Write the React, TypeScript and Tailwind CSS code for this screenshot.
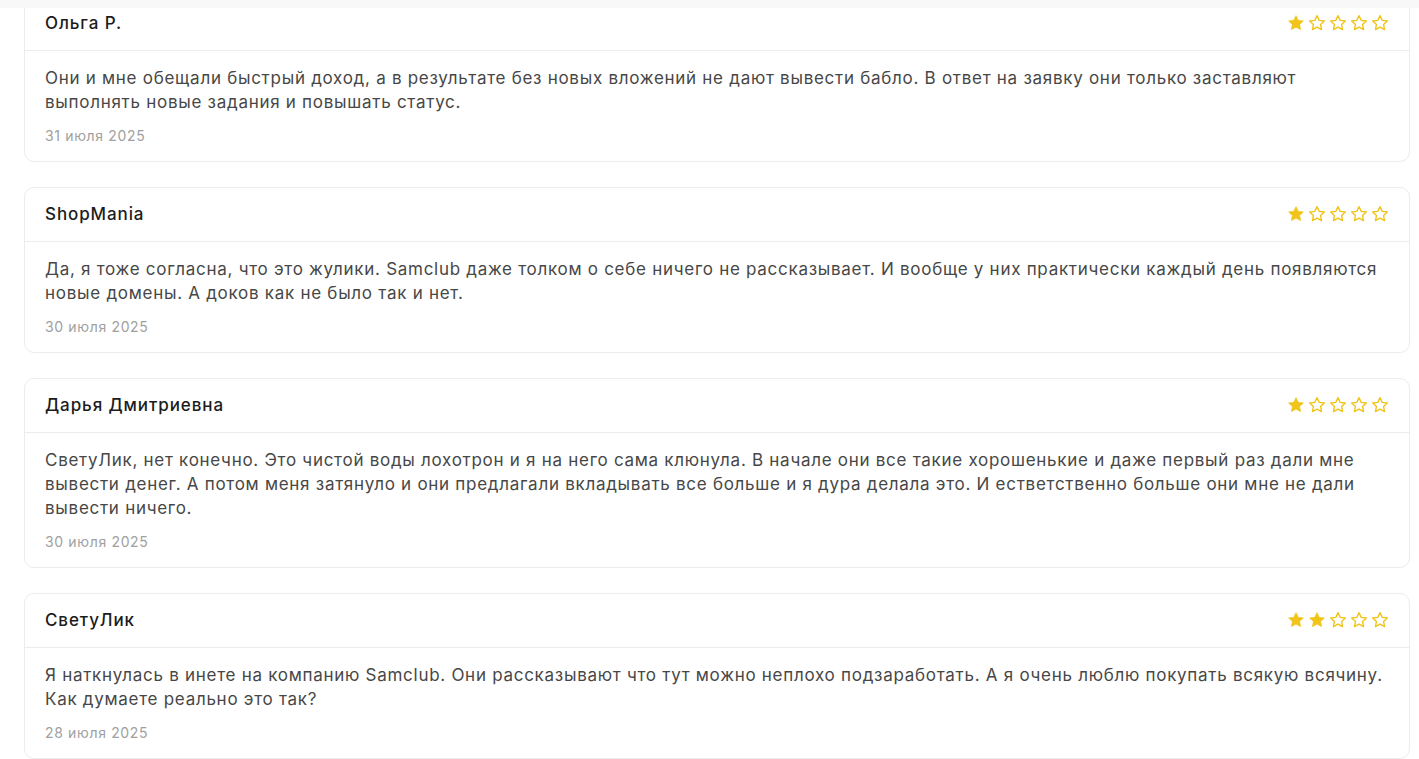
import React from "react";

type Review = { name: string; rating: number; text: string; date: string };

const reviews: Review[] = [
  {
    name: "Ольга Р.",
    rating: 1,
    text: "Они и мне обещали быстрый доход, а в результате без новых вложений не дают вывести бабло. В ответ на заявку они только заставляют выполнять новые задания и повышать статус.",
    date: "31 июля 2025",
  },
  {
    name: "ShopMania",
    rating: 1,
    text: "Да, я тоже согласна, что это жулики. Samclub даже толком о себе ничего не рассказывает. И вообще у них практически каждый день появляются новые домены. А доков как не было так и нет.",
    date: "30 июля 2025",
  },
  {
    name: "Дарья Дмитриевна",
    rating: 1,
    text: "СветуЛик, нет конечно. Это чистой воды лохотрон и я на него сама клюнула. В начале они все такие хорошенькие и даже первый раз дали мне вывести денег. А потом меня затянуло и они предлагали вкладывать все больше и я дура делала это. И естветственно больше они мне не дали вывести ничего.",
    date: "30 июля 2025",
  },
  {
    name: "СветуЛик",
    rating: 2,
    text: "Я наткнулась в инете на компанию Samclub. Они рассказывают что тут можно неплохо подзаработать. А я очень люблю покупать всякую всячину. Как думаете реально это так?",
    date: "28 июля 2025",
  },
];

function Star({ filled }: { filled: boolean }) {
  return (
    <svg width="18" height="18" viewBox="0 0 24 24" className="block">
      <path
        d="M12 2.2l2.95 6.3 6.85.8-5.05 4.7 1.35 6.8L12 17.4l-6.1 3.4 1.35-6.8L2.2 9.3l6.85-.8z"
        fill={filled ? "#f0c419" : "none"}
        stroke="#f0c419"
        strokeWidth={filled ? 1 : 1.8}
        strokeLinejoin="round"
      />
    </svg>
  );
}

function Card({ r }: { r: Review }) {
  return (
    <div className="rounded-[10px] border border-[#ececec] bg-white">
      <div className="flex h-[54px] items-center justify-between border-b border-[#ececec] pl-[20px] pr-[20px]">
        <div className="text-[17px] font-medium tracking-[0.9px] text-[#1c1c1c]">{r.name}</div>
        <div className="-mt-[2px] flex gap-[3px]">
          {[0, 1, 2, 3, 4].map((i) => (
            <Star key={i} filled={i < r.rating} />
          ))}
        </div>
      </div>
      <div className="px-[20px] pt-[15px] pb-[15px]">
        <p className="text-[17px] leading-[24px] tracking-[0.72px] text-[#474747]">{r.text}</p>
        <div className="mt-[12px] text-[14px] leading-[20px] tracking-[0.65px] text-[#a0a0a0]">{r.date}</div>
      </div>
    </div>
  );
}

export default function App() {
  return (
    <div
      className="relative min-h-[759px] overflow-hidden bg-white"
      style={{ fontFamily: "Inter, 'Noto Sans', sans-serif" }}
    >
      <div className="absolute left-0 right-0 top-0 z-10 h-[8px] bg-[#f8f8f8]" />
      <div className="-mt-[4px] flex flex-col gap-[25px] pl-[24px] pr-[9px]">
        {reviews.map((r, i) => (
          <Card key={i} r={r} />
        ))}
      </div>
    </div>
  );
}
